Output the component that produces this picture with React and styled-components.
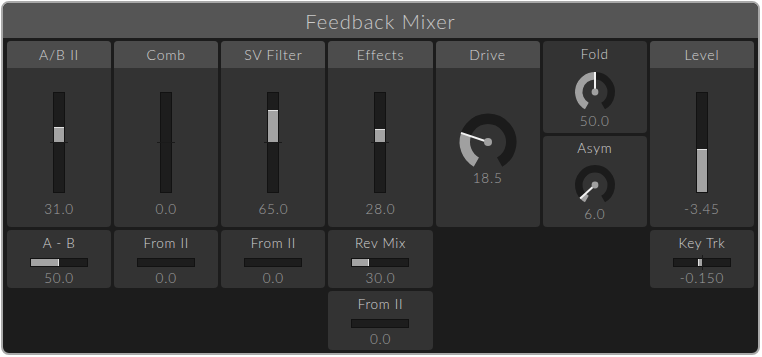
import React from "react";
import styled, { createGlobalStyle } from "styled-components";

const GlobalStyle = createGlobalStyle`
  html, body {
    margin: 0;
    padding: 0;
    background: #fff;
  }
  body {
    font-family: Lato, "Noto Sans", sans-serif;
    font-weight: 300;
  }
`;

const Frame = styled.div`
  box-sizing: border-box;
  margin: 1px;
  width: 759px;
  height: 354px;
  border: 2px solid #a9a9a9;
  border-radius: 8px;
  background: #1c1c1c;
  overflow: hidden;
  display: flex;
  flex-direction: column;
`;

const Title = styled.div`
  height: 35px;
  flex: none;
  background: #555555;
  color: #cacaca;
  font-size: 20px;
  letter-spacing: 1px;
  display: flex;
  align-items: center;
  justify-content: center;
`;

const Grid = styled.div`
  display: grid;
  grid-template-columns: repeat(7, 1fr);
  gap: 3px;
  padding: 3px 4px 0 4px;
  align-items: start;
`;

const Column = styled.div`
  display: flex;
  flex-direction: column;
  gap: 3px;
`;

const Cell = styled.div`
  box-sizing: border-box;
  height: ${p => p.h}px;
  background: #333333;
  border-radius: 4px;
  display: flex;
  flex-direction: column;
  align-items: center;
  padding-top: ${p => p.pt || 0}px;
  overflow: hidden;
`;

const Header = styled.div`
  align-self: stretch;
  height: 27px;
  flex: none;
  background: #4c4c4c;
  color: #d6d6d6;
  font-size: 14px;
  letter-spacing: 0.8px;
  display: flex;
  align-items: center;
  justify-content: center;
  margin-bottom: ${p => p.mb || 0}px;
`;

const Label = styled.div`
  color: #d6d6d6;
  font-size: 13.5px;
  letter-spacing: 0.7px;
  line-height: 18px;
`;

const Value = styled.div`
  color: #a0a0a0;
  font-size: 13.5px;
  letter-spacing: 0.8px;
  line-height: 17px;
  margin-top: ${p => p.mt || 0}px;
`;

const VTrack = styled.div`
  position: relative;
  box-sizing: border-box;
  width: 12px;
  height: 101px;
  border: 1px solid #121212;
  background: #1d1d1d;
`;

const VFill = styled.div`
  position: absolute;
  left: 0;
  right: 0;
  box-sizing: border-box;
  background: #a3a3a3;
  border-top: 1px solid #e2e2e2;
`;

const VTick = styled.div`
  position: absolute;
  left: -4px;
  right: -4px;
  top: 49px;
  height: 1px;
  background: #1a1a1a;
`;

const HTrack = styled.div`
  position: relative;
  box-sizing: border-box;
  width: 58px;
  height: 9px;
  margin-top: 6px;
  border: 1px solid #121212;
  background: #1d1d1d;
`;

const HFill = styled.div`
  position: absolute;
  top: 0;
  bottom: 0;
  box-sizing: border-box;
  background: #a3a3a3;
  border-${p => (p.neg ? "left" : "right")}: 1px solid #e2e2e2;
`;

const HTick = styled.div`
  position: absolute;
  top: -4px;
  bottom: -4px;
  left: 28px;
  width: 1px;
  background: #1a1a1a;
`;

function VSlider({ value, bipolar }) {
  const style = bipolar
    ? { bottom: "50%", height: `${value * 50}%` }
    : { bottom: 0, height: `${value * 100}%` };
  return (
    <VTrack>
      {value !== 0 && <VFill style={style} />}
      {bipolar && <VTick />}
    </VTrack>
  );
}

function HSlider({ value, bipolar }) {
  let style;
  if (bipolar) {
    const w = Math.abs(value) * 50;
    style = value < 0 ? { right: "50%", width: `${w}%` } : { left: "50%", width: `${w}%` };
  } else {
    style = { left: 0, width: `${value * 100}%` };
  }
  return (
    <HTrack>
      {value !== 0 && <HFill neg={bipolar && value < 0} style={style} />}
      {bipolar && <HTick />}
    </HTrack>
  );
}

const pt = (cx, cy, r, a) => {
  const rad = (a * Math.PI) / 180;
  return [cx + r * Math.sin(rad), cy - r * Math.cos(rad)];
};

const arc = (cx, cy, r, a0, a1) => {
  const [x0, y0] = pt(cx, cy, r, a0);
  const [x1, y1] = pt(cx, cy, r, a1);
  const large = a1 - a0 > 180 ? 1 : 0;
  return `M ${x0} ${y0} A ${r} ${r} 0 ${large} 1 ${x1} ${y1}`;
};

function Knob({ size, outer, width, dot, value, mt = 0 }) {
  const c = size / 2;
  const r = outer - width / 2;
  const a = -150 + value * 300;
  const [px, py] = pt(c, c, outer, a);
  return (
    <svg width={size} height={size} viewBox={`0 0 ${size} ${size}`} style={{ marginTop: mt }}>
      <path d={arc(c, c, r, -150, 150)} fill="none" stroke="#1b1b1b" strokeWidth={width} />
      {value > 0 && (
        <path d={arc(c, c, r, -150, a)} fill="none" stroke="#a0a0a0" strokeWidth={width} />
      )}
      <line x1={c} y1={c} x2={px} y2={py} stroke="#f2f2f2" strokeWidth="2" />
      <circle cx={c} cy={c} r={dot} fill="#a0a0a0" />
    </svg>
  );
}

function SliderColumn({ title, value, text, bipolar = true, children }) {
  return (
    <Column>
      <Cell h={186}>
        <Header mb={24}>{title}</Header>
        <VSlider value={value} bipolar={bipolar} />
        <Value mt={8}>{text}</Value>
      </Cell>
      {children}
    </Column>
  );
}

function SubCell({ label, value, text, bipolar, h = 58 }) {
  return (
    <Cell h={h} pt={4}>
      <Label>{label}</Label>
      <HSlider value={value} bipolar={bipolar} />
      <Value mt={3}>{text}</Value>
    </Cell>
  );
}

export default function App() {
  return (
    <>
      <GlobalStyle />
      <Frame>
        <Title>Feedback Mixer</Title>
        <Grid>
          <SliderColumn title="A/B II" value={0.31} text="31.0">
            <SubCell label="A - B" value={0.5} text="50.0" />
          </SliderColumn>
          <SliderColumn title="Comb" value={0} text="0.0">
            <SubCell label="From II" value={0} text="0.0" />
          </SliderColumn>
          <SliderColumn title="SV Filter" value={0.65} text="65.0">
            <SubCell label="From II" value={0} text="0.0" />
          </SliderColumn>
          <SliderColumn title="Effects" value={0.28} text="28.0">
            <SubCell label="Rev Mix" value={0.3} text="30.0" />
            <SubCell label="From II" value={0} text="0.0" h={59} />
          </SliderColumn>
          <Column>
            <Cell h={186}>
              <Header mb={42}>Drive</Header>
              <Knob size={64} outer={28.5} width={10.5} dot={4} value={0.262} />
              <Value mt={-4}>18.5</Value>
            </Cell>
          </Column>
          <Column>
            <Cell h={92} pt={4}>
              <Label>Fold</Label>
              <Knob size={44} outer={20} width={7.5} dot={3.4} value={0.5} mt={7} />
              <Value mt={-1}>50.0</Value>
            </Cell>
            <Cell h={91} pt={3}>
              <Label>Asym</Label>
              <Knob size={44} outer={20} width={7.5} dot={3.4} value={0.06} mt={6} />
              <Value mt={-1}>6.0</Value>
            </Cell>
          </Column>
          <SliderColumn title="Level" value={0.43} text="-3.45" bipolar={false}>
            <SubCell label="Key Trk" value={-0.15} text="-0.150" bipolar />
          </SliderColumn>
        </Grid>
      </Frame>
    </>
  );
}
